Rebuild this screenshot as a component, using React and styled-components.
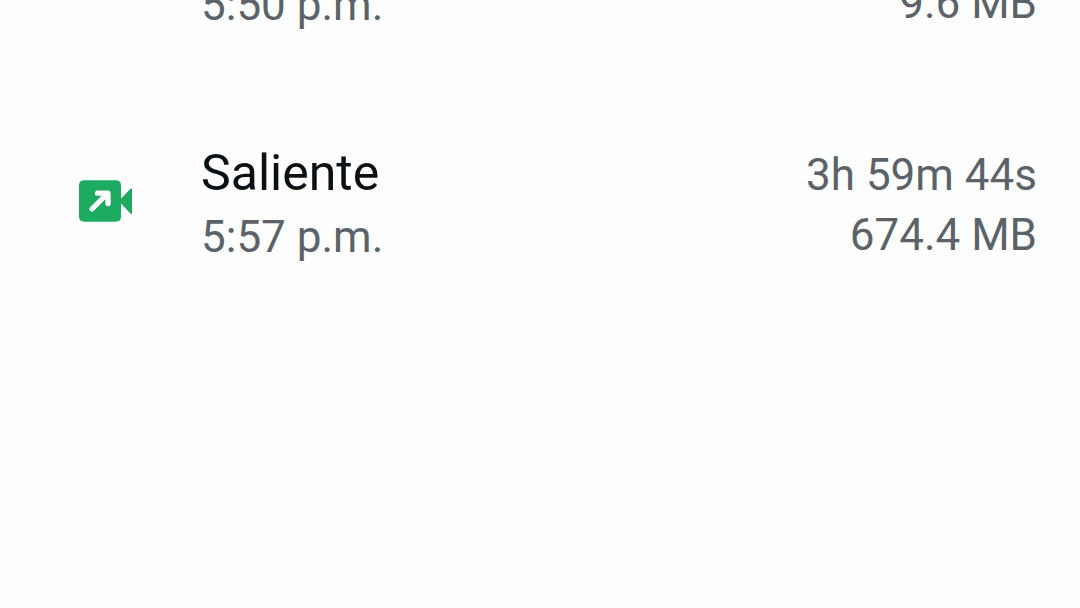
import React from "react";
import styled, { createGlobalStyle } from "styled-components";

const GlobalStyle = createGlobalStyle`
  * { box-sizing: border-box; }
  html, body { margin: 0; background: #fefefe; }
  body { font-family: Roboto, "Noto Sans", sans-serif; overflow: hidden; }
`;

const Screen = styled.main`
  height: 100vh;
  overflow: hidden;
`;

const CallList = styled.ul`
  list-style: none;
  margin: -146px 0 0;
  padding: 0;
`;

const CallRow = styled.li`
  display: flex;
  align-items: flex-start;
  height: 232px;
  padding: 56px 43px 0 78px;
`;

const IconSlot = styled.span`
  display: flex;
  flex: none;
  width: 123px;
  padding-top: 37px;
`;

const Column = styled.div`
  display: flex;
  flex-direction: column;
  flex: ${({ $grow }) => ($grow ? 1 : "none")};
  text-align: ${({ $grow }) => ($grow ? "left" : "right")};
`;

const Title = styled.span`
  font-size: 50px;
  line-height: 62px;
  color: #0a1014;
`;

const Detail = styled.span`
  font-size: 44px;
  line-height: ${({ $tight }) => ($tight ? 54 : 66)}px;
  color: #5b6368;
`;

const OutgoingVideoIcon = () => (
  <svg width="56" height="44" viewBox="0 0 56 44" aria-hidden="true">
    <path
      fill="#1daa61"
      d="M6.500 1.300H37.500Q43 1.300 43 6.500V19.800L52.700 9.500Q54 8.500 54 10.300V34Q54 35.800 52.700 34.800L43 24.500V37.500Q43 42.700 37.500 42.700H6.500Q1 42.700 1 37.500V6.500Q1 1.300 6.500 1.300Z"
    />
    <path
      d="M14 30L29.500 14.500M19.500 14.200H30V24.500"
      fill="none"
      stroke="#fefefe"
      strokeWidth="5.300"
      strokeLinecap="round"
      strokeLinejoin="round"
    />
  </svg>
);

const calls = [
  { type: "Saliente", time: "5:50 p.m.", duration: "2m 41s", size: "9.6 MB" },
  { type: "Saliente", time: "5:57 p.m.", duration: "3h 59m 44s", size: "674.4 MB" },
];

export default function App() {
  return (
    <Screen>
      <GlobalStyle />
      <CallList>
        {calls.map((call) => (
          <CallRow key={call.time}>
            <IconSlot>
              <OutgoingVideoIcon />
            </IconSlot>
            <Column $grow>
              <Title>{call.type}</Title>
              <Detail>{call.time}</Detail>
            </Column>
            <Column>
              <Detail>{call.duration}</Detail>
              <Detail $tight>{call.size}</Detail>
            </Column>
          </CallRow>
        ))}
      </CallList>
    </Screen>
  );
}
